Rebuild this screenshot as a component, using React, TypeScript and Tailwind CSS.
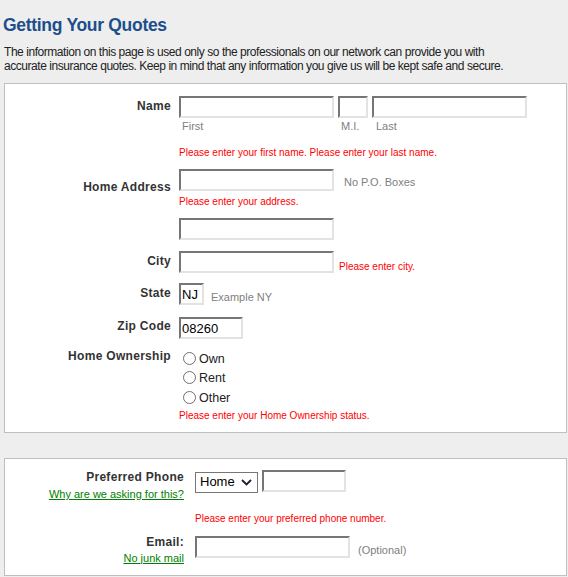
import React from "react";

const label = "text-right text-[12px] font-bold leading-[15px] tracking-[0.3px] text-[#333333]";
const hint = "text-[11px] leading-[14px] text-[#808080]";
const error = "text-[10px] leading-[13px] text-[#ff0000]";
const link = "block text-right text-[11px] leading-[14px] text-[#008000] underline";
const box = "ml-[4px] w-[563px] border border-[#bfbfbf] bg-white";

function TextBox({ className, value = "" }: { className: string; value?: string }) {
  return (
    <input
      readOnly
      value={value}
      className={`h-[22px] border-2 border-[#e3e3e3] border-t-[#767676] border-l-[#767676] bg-white px-[1px] text-[13px] leading-[18px] text-black outline-none ${className}`}
    />
  );
}

function Radio({ text }: { text: string }) {
  return (
    <div className="flex h-[19.5px] items-center">
      <span className="ml-[4px] h-[13px] w-[13px] rounded-full border border-[#6f6f6f] bg-white" />
      <span className="ml-[3px] pt-[2px] text-[12.5px] leading-[15px] text-[#222222]">{text}</span>
    </div>
  );
}

export default function App() {
  return (
    <div className="min-h-screen bg-[#eeeeee] pb-[2px] font-['Liberation_Sans',Arial,sans-serif]">
      <h1 className="ml-[3px] pt-[15px] text-[17.5px] font-bold leading-[20px] tracking-[-0.3px] text-[#1c4e8c]">
        Getting Your Quotes
      </h1>
      <p className="ml-[4px] mt-[10px] text-[12px] leading-[14px] tracking-[-0.45px] text-[#222222]">
        The information on this page is used only so the professionals on our network can provide you with
        <br />
        accurate insurance quotes. Keep in mind that any information you give us will be kept safe and secure.
      </p>

      <div className={`${box} mt-[10px] pt-[10px] pb-[9.5px]`}>
        {/* name */}
        <div className="flex">
          <div className={`${label} w-[166px] pt-[4.5px]`}>Name</div>
          <div className="ml-[8px]">
            <div className="flex gap-[4px]">
              <div>
                <TextBox className="w-[155px]" />
                <div className={`${hint} mt-[1px] pl-[3px]`}>First</div>
              </div>
              <div>
                <TextBox className="w-[30px]" />
                <div className={`${hint} mt-[1px] pl-[3px]`}>M.I.</div>
              </div>
              <div>
                <TextBox className="w-[155px]" />
                <div className={`${hint} mt-[1px] pl-[4px]`}>Last</div>
              </div>
            </div>
            <div className={`${error} mt-[13px]`}>Please enter your first name. Please enter your last name.</div>
          </div>
        </div>

        {/* address */}
        <div className="mt-[10px] flex">
          <div className={`${label} w-[166px] pt-[10.5px]`}>Home Address</div>
          <div className="ml-[8px]">
            <div className="flex items-start">
              <TextBox className="w-[155px]" />
              <span className={`${hint} ml-[10px] mt-[6px]`}>No P.O. Boxes</span>
            </div>
            <div className={`${error} mt-[3.5px]`}>Please enter your address.</div>
            <TextBox className="mt-[10.5px] w-[155px]" />
          </div>
        </div>

        {/* city */}
        <div className="mt-[10.5px] flex">
          <div className={`${label} w-[166px] pt-[3px]`}>City</div>
          <div className="ml-[8px] flex items-start">
            <TextBox className="w-[155px]" />
            <span className={`${error} ml-[5px] mt-[9px]`}>Please enter city.</span>
          </div>
        </div>

        {/* state */}
        <div className="mt-[10px] flex">
          <div className={`${label} w-[166px] pt-[3px]`}>State</div>
          <div className="ml-[8px] flex items-start">
            <TextBox className="w-[25px]" value="NJ" />
            <span className={`${hint} ml-[7px] mt-[7px]`}>Example NY</span>
          </div>
        </div>

        {/* zip */}
        <div className="mt-[10.5px] flex">
          <div className={`${label} w-[166px] pt-[3px]`}>Zip Code</div>
          <div className="ml-[8px]">
            <TextBox className="w-[64px]" value="08260" />
          </div>
        </div>

        {/* ownership */}
        <div className="mt-[9px] flex">
          <div className={`${label} w-[166px]`}>Home Ownership</div>
          <div className="ml-[8px]">
            <Radio text="Own" />
            <Radio text="Rent" />
            <Radio text="Other" />
            <div className={`${error} mt-[2px]`}>Please enter your Home Ownership status.</div>
          </div>
        </div>
      </div>

      <div className={`${box} mt-[25px] pt-[10px] pb-[10px]`}>
        {/* phone */}
        <div className="flex">
          <div className="w-[179px] pt-[1px]">
            <div className={label}>Preferred Phone</div>
            <a className={`${link} mt-[2.5px]`}>Why are we asking for this?</a>
          </div>
          <div className="ml-[11px]">
            <div className="flex items-start gap-[4px]">
              <div className="mt-[3px] flex h-[21px] w-[63px] items-center justify-between border border-[#767676] bg-white pl-[4px] pr-[4px] text-[13px] text-black">
                <span>Home</span>
                <svg width="11" height="7" viewBox="0 0 11 7" className="mr-[1px]">
                  <path d="M1 1 L5.5 5.5 L10 1" fill="none" stroke="#1e1e2e" strokeWidth="1.8" />
                </svg>
              </div>
              <TextBox className="mt-[1px] w-[84px]" />
            </div>
            <div className={`${error} mt-[19.5px]`}>Please enter your preferred phone number.</div>
          </div>
        </div>

        {/* email */}
        <div className="mt-[8.5px] flex">
          <div className="w-[179px] pt-[1px]">
            <div className={label}>Email:</div>
            <a className={`${link} mt-[1px]`}>No junk mail</a>
          </div>
          <div className="ml-[11px] flex items-start">
            <TextBox className="mt-[2px] w-[155px]" />
            <span className={`${hint} ml-[8px] mt-[9px]`}>(Optional)</span>
          </div>
        </div>
      </div>
    </div>
  );
}
